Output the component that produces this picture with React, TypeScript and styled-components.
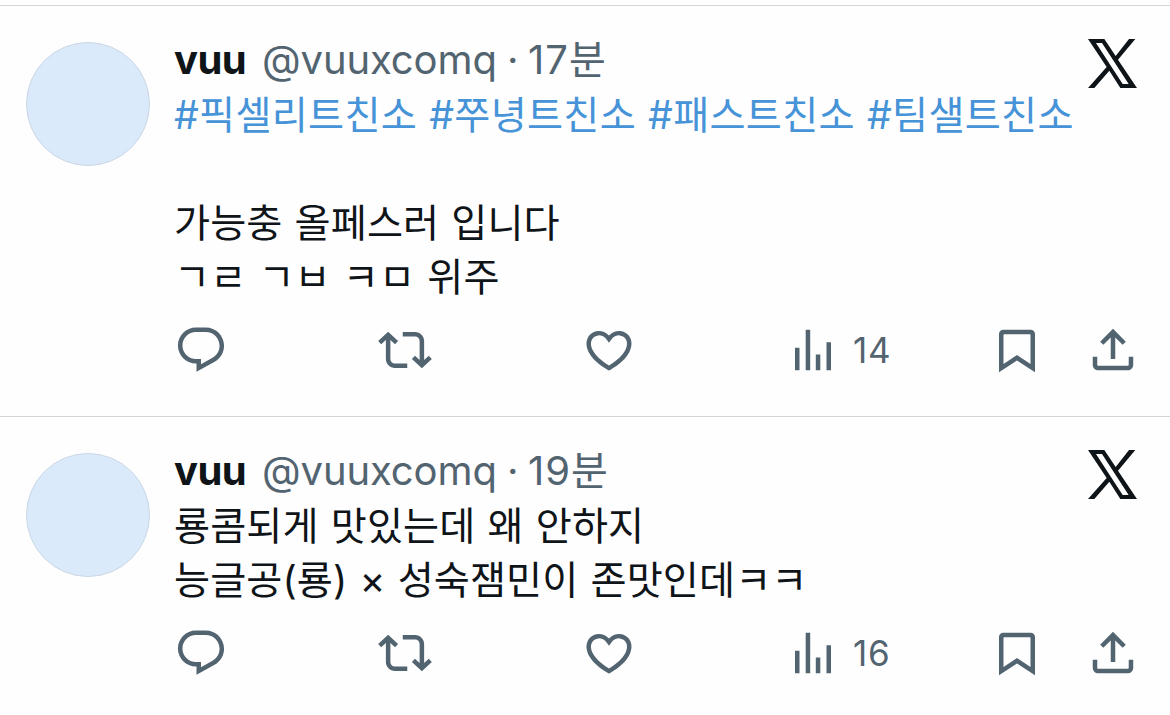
import { Fragment } from 'react';
import styled, { createGlobalStyle } from 'styled-components';

const GlobalStyle = createGlobalStyle`
    body {
        margin: 0;
        background-color: #fefefe;
    }
`;

const Timeline = styled.main`
    padding-top: 5px;
    color: #0f1419;
    font-family: Inter, 'Noto Sans CJK KR', sans-serif;
    font-size: 40px;
    line-height: 54px;
`;

const Post = styled.article`
    display: flex;
    align-items: flex-start;
    padding: 28px 33px 0 26px;
    border-top: 1px solid #d3d6d9;

    &:not(:last-child) {
        padding-bottom: 39px;
    }
`;

const Avatar = styled.div`
    flex: none;
    box-sizing: border-box;
    width: 124px;
    height: 124px;
    margin: 8px 24px 0 0;
    border: 1px solid #cbd7e5;
    border-radius: 50%;
    background-color: #daeafb;
`;

const Content = styled.div`
    flex: 1;
    min-width: 0;
`;

const Header = styled.header`
    display: flex;
    height: 54px;
    line-height: 52px;
    white-space: pre;
`;

const Name = styled.span`
    width: 88px;
    font-weight: 700;
    letter-spacing: -0.6px;
`;

const Handle = styled.span`
    width: 245px;
    color: #536471;
    letter-spacing: -0.1px;
`;

const Dot = styled.span`
    width: 21px;
    color: #536471;
`;

const Time = styled.span`
    color: #536471;
    letter-spacing: 1px;
`;

const LogoSvg = styled.svg`
    width: 49px;
    height: 49px;
    margin: 5px 0 0 auto;
    fill: #0f1419;
`;

const Line = styled.p`
    height: 54px;
    margin: 0;
    font-size: 39.2px;
    letter-spacing: 0.1px;
    line-height: 54px;
    white-space: nowrap;
    word-spacing: 1px;
`;

const Hashtag = styled.a`
    color: #4693d8;
    letter-spacing: 0.28px;
`;

const Actions = styled.div`
    display: grid;
    grid-template-columns: 204px 204px 204px 204px 96px 54px;
    margin-top: 19px;
`;

const Action = styled.div`
    display: flex;
    align-items: center;
    color: #536471;
`;

const ActionSvg = styled.svg`
    flex: none;
    width: 54px;
    height: 54px;
    fill: currentColor;
`;

const Count = styled.span`
    margin-left: 13px;
    font-size: 35px;
    letter-spacing: 0.7px;
`;

const icons = {
    reply: 'M1.751 10c0-4.42 3.584-8 8.005-8h4.366c4.49 0 8.129 3.64 8.129 8.13 0 2.96-1.607 5.68-4.196 7.11l-8.054 4.46v-3.69h-.067c-4.49.1-8.183-3.51-8.183-8.01zm8.005-6c-3.317 0-6.005 2.69-6.005 6 0 3.37 2.77 6.08 6.138 6.01l.351-.01h1.761v2.3l5.087-2.81c1.951-1.08 3.163-3.13 3.163-5.36 0-3.39-2.744-6.13-6.129-6.13H9.756z',
    repost: 'M4.5 3.88l4.432 4.14-1.364 1.46L5.5 7.55V16c0 1.1.896 2 2 2H13v2H7.5c-2.209 0-4-1.79-4-4V7.55L1.432 9.48.068 8.02 4.5 3.88zM16.5 6H11V4h5.5c2.209 0 4 1.79 4 4v8.45l2.068-1.93 1.364 1.46-4.432 4.14-4.432-4.14 1.364-1.46 2.068 1.93V8c0-1.1-.896-2-2-2z',
    like: 'M16.697 5.5c-1.222-.06-2.679.51-3.89 2.16l-.805 1.09-.806-1.09C9.984 6.01 8.526 5.44 7.304 5.5c-1.243.07-2.349.78-2.91 1.91-.552 1.12-.633 2.78.479 4.82 1.074 1.97 3.257 4.27 7.129 6.61 3.87-2.34 6.052-4.64 7.126-6.61 1.111-2.04 1.03-3.7.477-4.82-.561-1.13-1.666-1.84-2.908-1.91zm4.187 7.69c-1.351 2.48-4.001 5.12-8.379 7.67l-.503.3-.504-.3c-4.379-2.55-7.029-5.19-8.382-7.67-1.36-2.5-1.41-4.86-.514-6.67.887-1.79 2.647-2.91 4.601-3.01 1.651-.09 3.368.56 4.798 2.01 1.429-1.45 3.146-2.1 4.796-2.01 1.954.1 3.714 1.22 4.601 3.01.896 1.81.846 4.17-.514 6.67z',
    views: 'M8.75 21V3h2v18h-2zM18 21V8.5h2V21h-2zM4 21l.004-10h2L6 21H4zm9.248 0v-7h2v7h-2z',
    bookmark: 'M4 4.9C4 3.85 4.85 3 5.9 3h12.2c1.05 0 1.9.85 1.9 1.9v17l-8-5.2-8 5.2v-17zM6.3 5c-.2 0-.3.1-.3.3v12.9l6-3.95 6 3.95V5.3c0-.2-.1-.3-.3-.3H6.3z',
    share: 'M12 2.59l5.7 5.7-1.41 1.42L13 6.41V16h-2V6.41l-3.3 3.3-1.41-1.42L12 2.59zM21 15l-.02 3.51c0 1.38-1.12 2.49-2.5 2.49H5.5C4.11 21 3 19.88 3 18.5V15h2v3.5c0 .28.22.5.5.5h12.98c.28 0 .5-.22.5-.5L19 15h2z',
};

function Icon({ name }: { name: keyof typeof icons }) {
    return (
        <ActionSvg viewBox="0 0 24 24" aria-hidden="true">
            <path d={icons[name]} />
        </ActionSvg>
    );
}

function Logo() {
    return (
        <LogoSvg viewBox="0 0 147 147" aria-label="X">
            <path
                fillRule="evenodd"
                d="M0 0H49L83 51L123 0H142L90 62L147 147H97L64 95L19 147H0L56 84ZM24 12L104 135H122L42 12Z"
            />
        </LogoSvg>
    );
}

interface PostData {
    time: string;
    tags: string[];
    lines: string[];
    views: number;
}

const posts: PostData[] = [
    {
        time: '17분',
        tags: ['#픽셀리트친소', '#쭈녕트친소', '#패스트친소', '#팀샐트친소'],
        lines: ['', '가능충 올페스러 입니다', 'ㄱㄹ ㄱㅂ ㅋㅁ 위주'],
        views: 14,
    },
    {
        time: '19분',
        tags: [],
        lines: ['룡콤되게 맛있는데 왜 안하지', '능글공(룡) × 성숙잼민이 존맛인데ㅋㅋ'],
        views: 16,
    },
];

export default function App() {
    return (
        <>
            <GlobalStyle />
            <Timeline>
                {posts.map((post) => (
                    <Post key={post.time}>
                        <Avatar />
                        <Content>
                            <Header>
                                <Name>vuu</Name>
                                <Handle>@vuuxcomq</Handle>
                                <Dot>·</Dot>
                                <Time>{post.time}</Time>
                                <Logo />
                            </Header>
                            {post.tags.length > 0 && (
                                <Line>
                                    {post.tags.map((tag, i) => (
                                        <Fragment key={tag}>
                                            {i > 0 && ' '}
                                            <Hashtag>{tag}</Hashtag>
                                        </Fragment>
                                    ))}
                                </Line>
                            )}
                            {post.lines.map((line, i) => (
                                <Line key={i}>{line}</Line>
                            ))}
                            <Actions>
                                <Action><Icon name="reply" /></Action>
                                <Action><Icon name="repost" /></Action>
                                <Action><Icon name="like" /></Action>
                                <Action>
                                    <Icon name="views" />
                                    <Count>{post.views}</Count>
                                </Action>
                                <Action><Icon name="bookmark" /></Action>
                                <Action><Icon name="share" /></Action>
                            </Actions>
                        </Content>
                    </Post>
                ))}
            </Timeline>
        </>
    );
}
